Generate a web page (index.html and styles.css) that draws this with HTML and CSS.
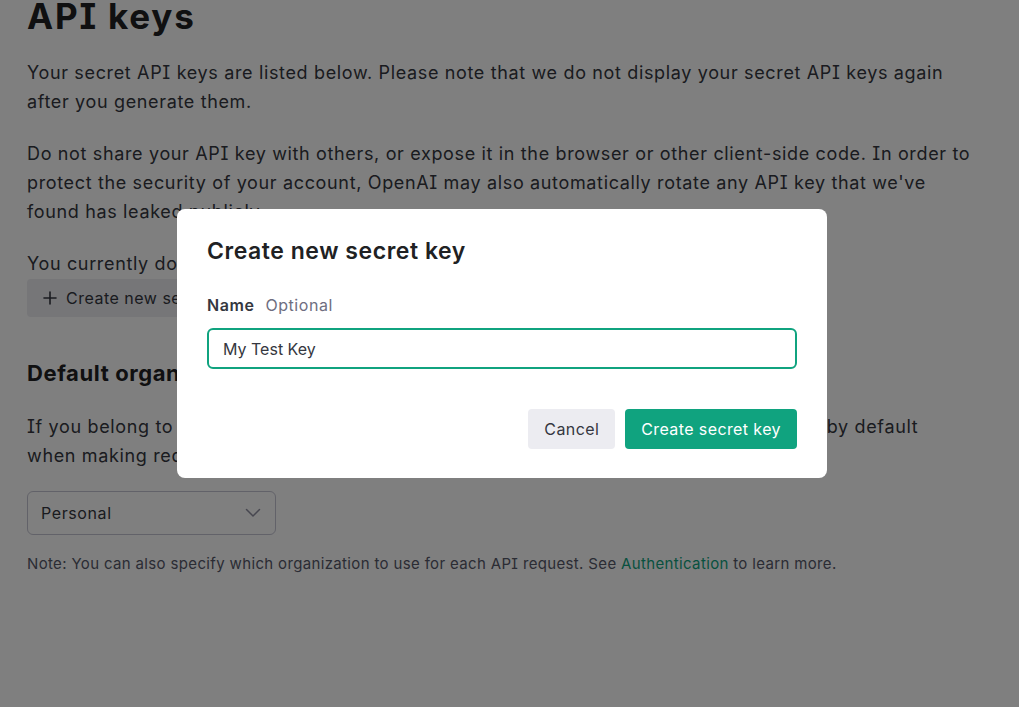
FILE: index.html
```html
<!DOCTYPE html>
<html lang="en">
<head>
<meta charset="utf-8">
<title>API keys</title>
<link rel="stylesheet" href="styles.css">
</head>
<body>
<main class="page">
  <h1 class="page-title">API keys</h1>
  <p class="para para-first">Your secret API keys are listed below. Please note that we do not display your secret API keys again after you generate them.</p>
  <p class="para">Do not share your API key with others, or expose it in the browser or other client-side code. In order to protect the security of your account, OpenAI may also automatically rotate any API key that we've found has leaked publicly.</p>
  <p class="para">You currently do not have any API keys. Please create one below.</p>
  <button class="btn-create" type="button">
    <svg class="plus" width="14" height="14" viewBox="0 0 14 14" aria-hidden="true"><path d="M7 1v12M1 7h12" stroke="currentColor" stroke-width="1.6" stroke-linecap="round"/></svg>
    <span>Create new secret key</span>
  </button>

  <h2 class="section-title">Default organization</h2>
  <p class="para para-section">If you belong to multiple organizations, this setting controls which organization is used by default when making requests with the API keys above.</p>
  <div class="select">
    <span>Personal</span>
    <svg class="chev" width="16" height="10" viewBox="0 0 16 10" aria-hidden="true"><path d="M1.5 1.5 8 8l6.5-6.5" fill="none" stroke="currentColor" stroke-width="1.5" stroke-linecap="round" stroke-linejoin="round"/></svg>
  </div>
  <p class="note">Note: You can also specify which organization to use for each API request. See <a class="link" href="#">Authentication</a> to learn more.</p>
</main>

<div class="overlay">
  <div class="modal" role="dialog" aria-labelledby="mtitle">
    <h3 class="modal-title" id="mtitle">Create new secret key</h3>
    <label class="field-label"><span class="lbl">Name</span><span class="opt">Optional</span></label>
    <div class="input">My Test Key</div>
    <div class="actions">
      <button class="btn btn-cancel" type="button">Cancel</button>
      <button class="btn btn-primary" type="button">Create secret key</button>
    </div>
  </div>
</div>
</body>
</html>
```

FILE: styles.css
```css
* { box-sizing: border-box; }
html, body { margin: 0; padding: 0; }
body {
  background: #ffffff;
  font-family: Inter, "Noto Sans", "Liberation Sans", sans-serif;
  font-feature-settings: "cv08";
  color: #353740;
  overflow: hidden;
  height: 707px;
}
.page {
  padding: 0 27px;
  width: 1010px;
  margin-top: -4px;
}
.page-title {
  margin: 0;
  font-size: 35px;
  line-height: 40px;
  font-weight: 700;
  color: #202123;
  letter-spacing: 1.8px;
}
.para {
  margin: 23px 0 0;
  font-size: 18px;
  line-height: 29px;
  color: #353740;
  max-width: 945px;
  letter-spacing: 0.65px;
}
.para-first { margin-top: 22px; }
.para-section { margin-top: 25px; }
.btn-create {
  margin-top: 1px;
  display: flex;
  align-items: center;
  gap: 9px;
  height: 38px;
  padding: 0 16px;
  background: #ececf1;
  border: none;
  border-radius: 4px;
  font: inherit;
  font-size: 16px;
  letter-spacing: 0.5px;
  color: #353740;
}
.plus { color: #353740; }
.section-title {
  margin: 42px 0 0;
  font-size: 22px;
  line-height: 28px;
  font-weight: 700;
  color: #202123;
  letter-spacing: 0.6px;
}
.select {
  margin-top: 21px;
  width: 249px;
  height: 44px;
  border: 1px solid #c5c5d2;
  border-radius: 6px;
  display: flex;
  align-items: center;
  justify-content: space-between;
  padding: 0 14px 0 13px;
  font-size: 16px;
  letter-spacing: 0.6px;
  color: #353740;
}
.chev { color: #8e8ea0; }
.note {
  margin: 19px 0 0;
  font-size: 15px;
  line-height: 20px;
  letter-spacing: 0.35px;
  color: #565869;
}
.link { color: #10a37f; text-decoration: none; }

.overlay {
  position: fixed;
  inset: 0;
  background: rgba(0, 0, 0, 0.5);
}
.modal {
  position: absolute;
  left: 177px;
  top: 209px;
  width: 650px;
  background: #ffffff;
  border-radius: 8px;
  padding: 28px 30px 29px;
  display: flex;
  flex-direction: column;
}
.modal-title {
  margin: 0;
  font-size: 23px;
  line-height: 28px;
  font-weight: 600;
  color: #202123;
  letter-spacing: 0.55px;
}
.field-label {
  margin-top: 28px;
  display: flex;
  gap: 11px;
  font-size: 16px;
  line-height: 24px;
  letter-spacing: 0.55px;
}
.lbl { font-weight: 600; color: #353740; }
.opt { color: #6e6e80; }
.input {
  margin-top: 11px;
  height: 41px;
  border: 2px solid #10a37f;
  border-radius: 6px;
  padding: 0 14px;
  display: flex;
  align-items: center;
  font-size: 16px;
  color: #353740;
}
.actions {
  margin-top: 40px;
  display: flex;
  justify-content: flex-end;
  gap: 10px;
}
.btn {
  height: 40px;
  border: none;
  border-radius: 4px;
  font: inherit;
  font-size: 16px;
  letter-spacing: 0.4px;
  padding: 0 16px;
}
.btn-cancel { background: #ececf1; color: #353740; }
.btn-primary { background: #10a37f; color: #ffffff; }
```
